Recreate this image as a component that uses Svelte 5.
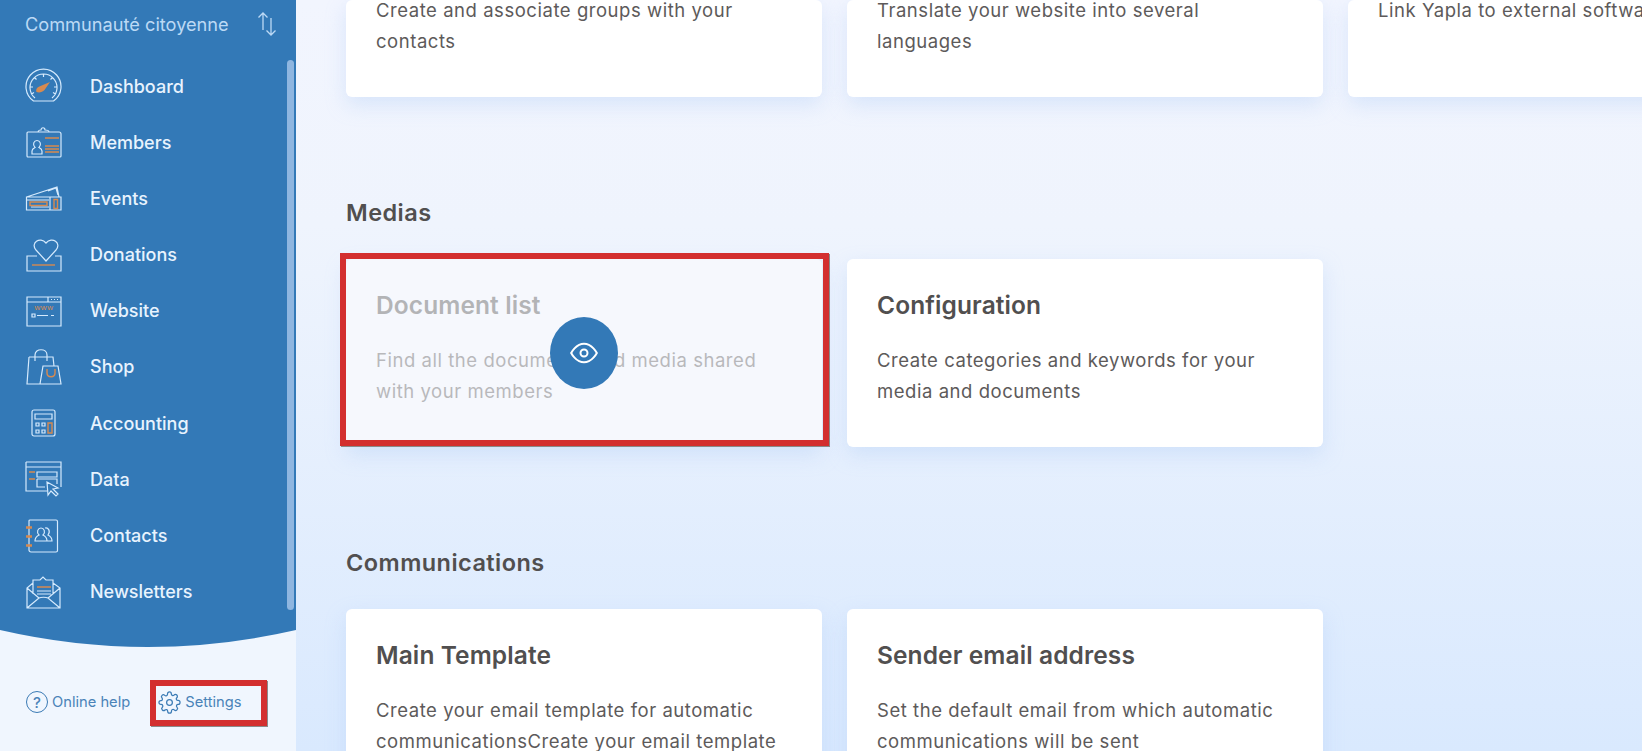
<script>
	const nav = [
		{
			name: 'Dashboard',
			line: 'M8.500 33A17.500 17.500 0 1 1 28.500 33ZM10 30A13.500 13.500 0 1 1 27 30M18.500 6v3M9.500 9.500l2 2M27.500 9.500l-2 2M5 19h3M32 19h-3M6.500 26l2.500-1.500M30.500 26L28 24.500',
			fill: 'M11.500 24c-1-3 1-5 4-6l9.500-4-5.500 8c-2 2-5 3-8 2z'
		},
		{
			name: 'Members',
			line: 'M3 8h10M24 8h10a2 2 0 0 1 2 2v22a1 1 0 0 1-1 1H3a1 1 0 0 1-1-1V9a1 1 0 0 1 1-1zM13 8c0-2 3-2 3-2 0-3 4-3 4 0 0 0 4 0 4 2zM7 30v-3c0-2 2-3 3-3.500-3-3-1-7 2-7s5 4 2 7c1 .5 3 1.500 3 3.500v3z',
			orange: 'M20 14h14M20 22h14M20 25h14M20 28h14'
		},
		{
			name: 'Events',
			line: 'M1.500 17v13h34.500V17ZM1.500 17L32 7l2 10M23 11l8-3 2 7M1.500 20H24M6 27h18M25 17v13',
			orange: 'M5 22h17v3.500H5ZM29 19.500h3.500v9H29Z'
		},
		{
			name: 'Donations',
			line: 'M21 24L11 13C5 6 15-1 21 6 27-1 37 6 31 13ZM12 19H2V34H36V19H30',
			orange: 'M7 28h23'
		},
		{
			name: 'Website',
			line: 'M2 4h34v29H2ZM2 9h34M23 4v5M26 6.500h1M29 6.500h1M32 6.500h1M7 21h3v3H7ZM12 22.500h11M26 22.500h3'
		},
		{
			name: 'Shop',
			line: 'M4 8H28L29 17M4 8L2 35H16M10 12V6c0-7 12-7 12 0v6M18 17H33L36 35H15Z',
			orange: 'M22 20v4c0 5 8 5 8 0v-4'
		},
		{
			name: 'Accounting',
			line: 'M9 5h19a2 2 0 0 1 2 2v22a2 2 0 0 1-2 2H9a2 2 0 0 1-2-2V7a2 2 0 0 1 2-2ZM10 9h17v5H10ZM11 18h3v3h-3ZM17 18h3v3h-3ZM11 25h3v3h-3ZM17 25h3v3h-3Z',
			orange: 'M23 18h4v10h-4Z'
		},
		{
			name: 'Data',
			line: 'M1 1H36V26M1 1V30H22M1 6H36M12 11H32V16H12ZM12 18H32V23M12 18V26H20M22 21L23 34 26 30 31 35 33 33 28 28 33 27Z',
			orange: 'M4 11h6M4 18h6'
		},
		{
			name: 'Contacts',
			line: 'M5 2h26a1.500 1.500 0 0 1 1.500 1.500v29a1.500 1.500 0 0 1-1.500 1.500H6a2 2 0 0 1-2-2V3a1 1 0 0 1 1-1ZM10 23c0-4 2-5 4-6-3-3-1-7 2-7s5 4 2 7c2 1 4 2 4 6ZM20 10c3-1 6 3 3 7 2 1 4 2 4 6h-5',
			orange: 'M1 9.500h6M1 18.500h6M1 27.500h6',
			thick: true
		},
		{
			name: 'Newsletters',
			line: 'M2 14v20h33V14L28 9V6h-7l-3-3-3 3H8v3ZM8 9v11M28 9v11M2 34l12-10c2-1 7-1 9 0l12 10M2 14l12 10M35 14L23 24M12 17h14M12 20h14',
			orange: 'M12 13h14'
		}
	];
</script>

<div class="page">
	<aside class="side">
		<div class="blue">
			<div class="org">
				<span>Communauté citoyenne</span>
				<svg width="20" height="24" viewBox="0 0 20 24" fill="none" stroke="#bcd9f5" stroke-width="1.300"><path d="M6 18V1M1.500 5.500L6 1l4.500 4.500M14 6v17M9.500 18.500L14 23l4.500-4.500" /></svg>
			</div>
			<nav class="nav">
				{#each nav as item}
					<div class="nav-item">
						<svg class="ico" width="38" height="36" viewBox="0 0 38 36" fill="none">
							<path d={item.line} stroke="#d5eafd" stroke-width="1.200" />
							{#if item.orange}
								<path d={item.orange} stroke="#d78a50" stroke-width={item.thick ? 2.500 : 1.400} />
							{/if}
							{#if item.fill}
								<path d={item.fill} fill="#d78a50" />
							{/if}
							{#if item.name === 'Website'}
								<text x="19" y="17" text-anchor="middle" class="www">www</text>
							{/if}
						</svg>
						<span>{item.name}</span>
					</div>
				{/each}
			</nav>
			<div class="thumb"></div>
		</div>
		<div class="foot">
			<span class="link">
				<span class="help">?</span>
				Online help
			</span>
			<span class="link boxed">
				<svg width="23" height="23" viewBox="0 0 24 24" fill="none" stroke="#3b7bb5" stroke-width="1.300">
					<circle cx="12" cy="12" r="3" />
					<path d="M19.400 15a1.650 1.650 0 0 0 .33 1.820l.06.06a2 2 0 0 1-2.830 2.830l-.06-.06a1.650 1.650 0 0 0-2.820 1.170V21a2 2 0 0 1-4 0v-.09A1.650 1.650 0 0 0 7.400 19.730l-.06.06a2 2 0 0 1-2.830-2.830l.06-.06a1.650 1.650 0 0 0-1.170-2.820H3a2 2 0 0 1 0-4h.09A1.650 1.650 0 0 0 4.270 7.400l-.06-.06a2 2 0 0 1 2.830-2.830l.06.06A1.650 1.650 0 0 0 9.920 3.400V3a2 2 0 0 1 4 0v.09a1.650 1.650 0 0 0 2.820 1.170l.06-.06a2 2 0 0 1 2.830 2.830l-.06.06a1.650 1.650 0 0 0 1.170 2.820H21a2 2 0 0 1 0 4h-.09a1.650 1.650 0 0 0-1.510 1z" />
				</svg>
				Settings
				<span class="redbox settings-box"></span>
			</span>
		</div>
	</aside>
	<main class="main">
		<div class="grid">
			<div class="card cut"><p>Create and associate groups with your contacts</p></div>
			<div class="card cut"><p>Translate your website into several languages</p></div>
			<div class="card cut"><p>Link Yapla to external software</p></div>
		</div>
		<h2>Medias</h2>
		<div class="grid">
			<div class="card hovered">
				<div class="faded">
					<h3>Document list</h3>
					<p>Find all the documents and media shared with your members</p>
				</div>
				<div class="eye">
					<svg width="28" height="28" viewBox="0 0 24 24" fill="none" stroke="#fff" stroke-width="1.700">
						<path d="M1 12s4-8 11-8 11 8 11 8-4 8-11 8-11-8-11-8z" />
						<circle cx="12" cy="12" r="3" />
					</svg>
				</div>
				<span class="redbox doc-box"></span>
			</div>
			<div class="card">
				<h3>Configuration</h3>
				<p>Create categories and keywords for your media and documents</p>
			</div>
		</div>
		<h2>Communications</h2>
		<div class="grid">
			<div class="card">
				<h3>Main Template</h3>
				<p>Create your email template for automatic communicationsCreate your email template</p>
			</div>
			<div class="card">
				<h3>Sender email address</h3>
				<p>Set the default email from which automatic communications will be sent</p>
			</div>
		</div>
	</main>
</div>

<style>
	:global(body) {
		margin: 0;
		overflow: hidden;
	}

	.page {
		display: flex;
		height: 751px;
		overflow: hidden;
		font-family: Inter, "Noto Sans", sans-serif;
		color: #5d5a5a;
		background: linear-gradient(#f2f5fe 0%, #eff4fd 30%, #d9e9fe 100%);
	}

	.side {
		width: 296px;
		background: #f0f6fe;
		flex-shrink: 0;
	}

	.blue {
		background: #3379b7;
		height: 647px;
		padding: 12px 19px 0 25px;
		box-sizing: border-box;
		color: #e8f3fe;
		position: relative;
		clip-path: path('M0 0H296V630Q148 664 0 630Z');
	}

	.org {
		display: flex;
		justify-content: space-between;
		align-items: center;
		color: #bcd9f5;
		font-size: 18.200px;
		height: 24px;
	}

	.nav {
		margin-top: 32px;
		display: flex;
		flex-direction: column;
		gap: 20.200px;
	}

	.nav-item {
		display: flex;
		align-items: center;
		gap: 27px;
		font-size: 18px;
		font-weight: 500;
		height: 36px;
	}

	.ico {
		flex-shrink: 0;
	}

	.www {
		font-size: 8px;
		font-family: "Liberation Sans", sans-serif;
		fill: #d78a50;
		letter-spacing: 0.500px;
	}

	.thumb {
		position: absolute;
		left: 287px;
		top: 60px;
		width: 7px;
		height: 550px;
		border-radius: 4px;
		background: #8fb6e0;
	}

	.foot {
		display: flex;
		align-items: center;
		height: 110px;
		padding-left: 26px;
		font-size: 14.700px;
		color: #4a83b8;
	}

	.link {
		display: flex;
		align-items: center;
		gap: 4px;
		position: relative;
	}

	.help {
		width: 20px;
		height: 20px;
		border: 1.500px solid #3b7bb5;
		border-radius: 50%;
		display: flex;
		align-items: center;
		justify-content: center;
		font-size: 15px;
		font-weight: 500;
	}

	.boxed {
		margin-left: 28px;
	}

	.redbox {
		position: absolute;
		border: 6px solid #d32f2f;
		box-shadow: 1px 1px 0 #8a8a8a;
		box-sizing: border-box;
		pointer-events: none;
	}

	.settings-box {
		left: -8px;
		top: -11px;
		width: 117px;
		height: 46px;
	}

	.main {
		flex: 1;
		padding-left: 50px;
	}

	.grid {
		display: flex;
		gap: 25px;
	}

	.card {
		width: 476px;
		height: 188px;
		background: #fff;
		border-radius: 6px;
		padding: 31px 30px 0;
		box-sizing: border-box;
		flex-shrink: 0;
		position: relative;
		box-shadow: 0 8px 20px rgba(170, 200, 245, 0.35);
	}

	.card.cut {
		height: 97px;
		padding-top: 0;
	}

	.card.cut p {
		margin-top: -5px;
	}

	.card.cut:nth-child(3) p {
		white-space: nowrap;
	}

	.hovered {
		background: #f6f8fd;
	}

	.faded {
		opacity: 0.4;
	}

	.eye {
		position: absolute;
		left: 204px;
		top: 58px;
		width: 68px;
		height: 72px;
		border-radius: 50%;
		background: #3379b7;
		display: flex;
		align-items: center;
		justify-content: center;
	}

	.doc-box {
		left: -6px;
		top: -6px;
		right: -7px;
		bottom: 1px;
	}

	h2 {
		font-size: 23.500px;
		font-weight: 600;
		letter-spacing: 0.450px;
		line-height: 30px;
		margin: 101px 0 31px;
		color: #514f4f;
	}

	h3 {
		font-size: 24.500px;
		font-weight: 600;
		letter-spacing: 0.100px;
		line-height: 30px;
		margin: 0 0 25px;
		color: #514f4f;
	}

	p {
		font-size: 18.500px;
		letter-spacing: 0.540px;
		line-height: 31px;
		margin: 0;
	}
</style>
